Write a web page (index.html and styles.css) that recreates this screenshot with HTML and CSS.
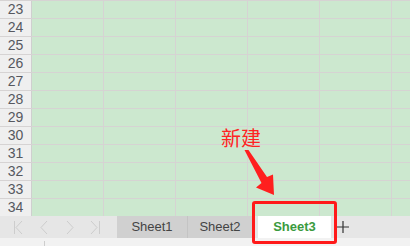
FILE: index.html
```html
<html>
<head>
    <title>Sheet</title>
    <link rel="stylesheet" href="styles.css">
</head>
<body>
<div class="book">

    <div class="grid">
        <div class="row"><div class="rownum">23</div><div class="cell"></div><div class="cell"></div><div class="cell"></div><div class="cell"></div><div class="cell"></div><div class="cell"></div></div>
        <div class="row"><div class="rownum">24</div><div class="cell"></div><div class="cell"></div><div class="cell"></div><div class="cell"></div><div class="cell"></div><div class="cell"></div></div>
        <div class="row"><div class="rownum">25</div><div class="cell"></div><div class="cell"></div><div class="cell"></div><div class="cell"></div><div class="cell"></div><div class="cell"></div></div>
        <div class="row"><div class="rownum">26</div><div class="cell"></div><div class="cell"></div><div class="cell"></div><div class="cell"></div><div class="cell"></div><div class="cell"></div></div>
        <div class="row"><div class="rownum">27</div><div class="cell"></div><div class="cell"></div><div class="cell"></div><div class="cell"></div><div class="cell"></div><div class="cell"></div></div>
        <div class="row"><div class="rownum">28</div><div class="cell"></div><div class="cell"></div><div class="cell"></div><div class="cell"></div><div class="cell"></div><div class="cell"></div></div>
        <div class="row"><div class="rownum">29</div><div class="cell"></div><div class="cell"></div><div class="cell"></div><div class="cell"></div><div class="cell"></div><div class="cell"></div></div>
        <div class="row"><div class="rownum">30</div><div class="cell"></div><div class="cell"></div><div class="cell"></div><div class="cell"></div><div class="cell"></div><div class="cell"></div></div>
        <div class="row"><div class="rownum">31</div><div class="cell"></div><div class="cell"></div><div class="cell"></div><div class="cell"></div><div class="cell"></div><div class="cell"></div></div>
        <div class="row"><div class="rownum">32</div><div class="cell"></div><div class="cell"></div><div class="cell"></div><div class="cell"></div><div class="cell"></div><div class="cell"></div></div>
        <div class="row"><div class="rownum">33</div><div class="cell"></div><div class="cell"></div><div class="cell"></div><div class="cell"></div><div class="cell"></div><div class="cell"></div></div>
        <div class="row"><div class="rownum">34</div><div class="cell"></div><div class="cell"></div><div class="cell"></div><div class="cell"></div><div class="cell"></div><div class="cell"></div></div>
    </div>

    <div class="tabbar">
        <div class="nav">
            <svg width="117" height="22" viewBox="0 0 117 22">
                <g fill="none" stroke="#cdcdcd" stroke-width="1">
                    <path d="M14.5 5v13M22 5l-6 6.5 6 6.5"/>
                    <path d="M47 5l-6 6.5 6 6.5"/>
                    <path d="M67 5l6 6.5-6 6.5"/>
                    <path d="M91 5l6 6.5-6 6.5M99.5 5v13"/>
                </g>
            </svg>
        </div>
        <div class="tab">Sheet1</div>
        <div class="tab tab2">Sheet2</div>
        <div class="tab active">Sheet3</div>
        <div class="add">
            <svg width="12" height="12" viewBox="0 0 12 12">
                <path d="M6 0v12M0 6h12" stroke="#333" stroke-width="1.2"/>
            </svg>
        </div>
    </div>

    <div class="status"><span class="tick"></span></div>

    <!-- annotation -->
    <div class="note">新建</div>
    <svg class="arrow" width="40" height="50" viewBox="240 148 40 50">
        <polygon points="244.5,150 248.5,150 267,177 273,174.5 274,195 256,187.5 261.5,183" fill="#ff1f1f"/>
    </svg>
    <div class="mark"></div>

</div>
</body>
</html>
```

FILE: styles.css
```css
body{
    margin: 0;
    font-family: "Liberation Sans", Arial, sans-serif;
    overflow: hidden;
}

.book{
    position: relative;
    width: 410px;
    height: 246px;
    background-color: #f2f2f2;
}

/* grid */
.grid{
    border-top: 1px solid #d6d3d3;
    height: 215px;
    overflow: hidden;
    background-color: #cce8cf;
}
.row{
    display: flex;
    height: 17px;
    border-bottom: 1px solid #d6d3d3;
}
.rownum{
    flex: none;
    width: 31px;
    border-right: 1px solid #cfcfcf;
    background-color: #efefef;
    color: #56585f;
    font-size: 14px;
    line-height: 17px;
    text-align: center;
}
.cell{
    flex: none;
    width: 71px;
    border-right: 1px solid #d6d3d3;
}

/* sheet tabs */
.tabbar{
    display: flex;
    height: 22px;
    background-color: #e6e6e6;
}
.nav{
    width: 117px;
    height: 22px;
}
.nav svg{
    display: block;
}
.tab{
    width: 70px;
    border-right: 1px solid #c4c4c4;
    background-color: #d0d0d0;
    color: #444;
    font-size: 13px;
    line-height: 22px;
    text-align: center;
}
.tab2{
    width: 64px;
    border-right: none;
}
.tab.active{
    width: 73px;
    margin-left: 6px;
    border-right: none;
    background-color: #fff;
    color: #3a9a3e;
    font-weight: bold;
}
.add{
    display: flex;
    align-items: center;
    margin-left: 6px;
}
.add svg{
    display: block;
}

.status{
    height: 8px;
    position: relative;
}
.tick{
    position: absolute;
    left: 44px;
    top: 3px;
    width: 1px;
    height: 5px;
    background-color: #cdcdcd;
}

/* red annotation */
.note{
    position: absolute;
    left: 221px;
    top: 127px;
    color: #ff2323;
    font-family: "Noto Sans CJK SC", sans-serif;
    font-size: 20px;
    line-height: 22px;
}
.arrow{
    position: absolute;
    left: 240px;
    top: 148px;
}
.mark{
    position: absolute;
    left: 252px;
    top: 201px;
    width: 79px;
    height: 37px;
    border: 3px solid #ff1a1a;
    border-radius: 3px;
}
```
